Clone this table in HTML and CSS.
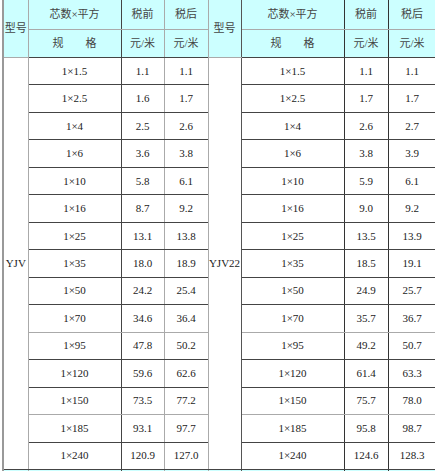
FILE: index.html
```html
<!DOCTYPE html>
<html lang="zh-CN">
<head>
<meta charset="utf-8">
<title>电缆价格表</title>
<link rel="stylesheet" href="styles.css">
</head>
<body>
<table class="price">
  <colgroup>
    <col class="w1"><col class="w2"><col class="w3"><col class="w4">
    <col class="w5"><col class="w6"><col class="w7"><col class="w8">
  </colgroup>
  <tbody>
    <tr class="h1">
      <td class="c1 hd" rowspan="2">型号</td>
      <td class="c2 hd">芯数×平方</td>
      <td class="c3 hd">税前</td>
      <td class="c4 hd">税后</td>
      <td class="c5 hd" rowspan="2">型号</td>
      <td class="c6 hd">芯数×平方</td>
      <td class="c7 hd">税前</td>
      <td class="c8 hd">税后</td>
    </tr>
    <tr class="h2">
      <td class="c2 hd">规　　格</td>
      <td class="c3 hd">元/米</td>
      <td class="c4 hd">元/米</td>
      <td class="c6 hd">规　　格</td>
      <td class="c7 hd">元/米</td>
      <td class="c8 hd">元/米</td>
    </tr>
    <tr class="r">
      <td class="c1 type" rowspan="15">YJV</td>
      <td class="c2">1×1.5</td><td class="c3">1.1</td><td class="c4">1.1</td>
      <td class="c5 type" rowspan="15">YJV22</td>
      <td class="c6">1×1.5</td><td class="c7">1.1</td><td class="c8">1.1</td>
    </tr>
    <tr class="r"><td class="c2">1×2.5</td><td class="c3">1.6</td><td class="c4">1.7</td><td class="c6">1×2.5</td><td class="c7">1.7</td><td class="c8">1.7</td></tr>
    <tr class="r"><td class="c2">1×4</td><td class="c3">2.5</td><td class="c4">2.6</td><td class="c6">1×4</td><td class="c7">2.6</td><td class="c8">2.7</td></tr>
    <tr class="r"><td class="c2">1×6</td><td class="c3">3.6</td><td class="c4">3.8</td><td class="c6">1×6</td><td class="c7">3.8</td><td class="c8">3.9</td></tr>
    <tr class="r"><td class="c2">1×10</td><td class="c3">5.8</td><td class="c4">6.1</td><td class="c6">1×10</td><td class="c7">5.9</td><td class="c8">6.1</td></tr>
    <tr class="r"><td class="c2">1×16</td><td class="c3">8.7</td><td class="c4">9.2</td><td class="c6">1×16</td><td class="c7">9.0</td><td class="c8">9.2</td></tr>
    <tr class="r"><td class="c2">1×25</td><td class="c3">13.1</td><td class="c4">13.8</td><td class="c6">1×25</td><td class="c7">13.5</td><td class="c8">13.9</td></tr>
    <tr class="r"><td class="c2">1×35</td><td class="c3">18.0</td><td class="c4">18.9</td><td class="c6">1×35</td><td class="c7">18.5</td><td class="c8">19.1</td></tr>
    <tr class="r"><td class="c2">1×50</td><td class="c3">24.2</td><td class="c4">25.4</td><td class="c6">1×50</td><td class="c7">24.9</td><td class="c8">25.7</td></tr>
    <tr class="r g"><td class="c2">1×70</td><td class="c3">34.6</td><td class="c4">36.4</td><td class="c6">1×70</td><td class="c7">35.7</td><td class="c8">36.7</td></tr>
    <tr class="r"><td class="c2">1×95</td><td class="c3">47.8</td><td class="c4">50.2</td><td class="c6">1×95</td><td class="c7">49.2</td><td class="c8">50.7</td></tr>
    <tr class="r"><td class="c2">1×120</td><td class="c3">59.6</td><td class="c4">62.6</td><td class="c6">1×120</td><td class="c7">61.4</td><td class="c8">63.3</td></tr>
    <tr class="r g"><td class="c2">1×150</td><td class="c3">73.5</td><td class="c4">77.2</td><td class="c6">1×150</td><td class="c7">75.7</td><td class="c8">78.0</td></tr>
    <tr class="r"><td class="c2">1×185</td><td class="c3">93.1</td><td class="c4">97.7</td><td class="c6">1×185</td><td class="c7">95.8</td><td class="c8">98.7</td></tr>
    <tr class="r"><td class="c2">1×240</td><td class="c3">120.9</td><td class="c4">127.0</td><td class="c6">1×240</td><td class="c7">124.6</td><td class="c8">128.3</td></tr>
    <tr class="next">
      <td class="c1 hd"></td><td class="c2 hd"></td><td class="c3 hd"></td><td class="c4 hd"></td>
      <td class="c5 hd"></td><td class="c6 hd"></td><td class="c7 hd"></td><td class="c8 hd"></td>
    </tr>
  </tbody>
</table>
</body>
</html>
```
FILE: styles.css
```css
html, body {
  margin: 0;
  padding: 0;
  background: #ffffff;
  overflow: hidden;
}

body {
  padding-left: 2px;
  font-family: "Liberation Serif", "Noto Sans CJK SC", serif;
  font-size: 11px;
  color: #222222;
}

.price {
  border-collapse: collapse;
  table-layout: fixed;
  width: 434px;
  margin-top: -1px;
}

.w1 { width: 25px; }
.w2 { width: 93px; }
.w3 { width: 43px; }
.w4 { width: 44px; }
.w5 { width: 33px; }
.w6 { width: 103px; }
.w7 { width: 44px; }
.w8 { width: 48px; }

.price td {
  padding: 0;
  text-align: center;
  vertical-align: middle;
  border: 1px solid #444444;
  white-space: nowrap;
  line-height: 13px;
}

.hd {
  background: #ccffff;
  color: #444444;
}

.h1 { height: 30px; }
.h2 { height: 28px; }
.r { height: 27.47px; }
.next { height: 20px; }

.h1 td { border-bottom-color: #aaaaaa; }
.h2 td { border-top-color: #aaaaaa; }

.r.g td { border-bottom-color: #aaaaaa; }
.r.g + .r td { border-top-color: #aaaaaa; }

/* vertical border colours per column edge */
.price td.c1 { border-left-color: #999999; border-right-color: #aaaaaa; }
.price td.c2 { border-left-color: #aaaaaa; border-right-color: #444444; }
.price td.c3 { border-left-color: #444444; border-right-color: #aaaaaa; }
.price td.c4 { border-left-color: #aaaaaa; border-right-color: #aaaaaa; }
.price td.c5 { border-left-color: #aaaaaa; border-right-color: #555555; }
.price td.c6 { border-left-color: #555555; border-right-color: #333333; }
.price td.c7 { border-left-color: #333333; border-right-color: #333333; }
.price td.c8 { border-left-color: #333333; border-right-color: #333333; }

.price td.c1 { border-left-width: 2px; }

.type {
  text-align: left;
  padding-left: 1px;
}

.c5.type {
  padding-left: 0;
}
```
